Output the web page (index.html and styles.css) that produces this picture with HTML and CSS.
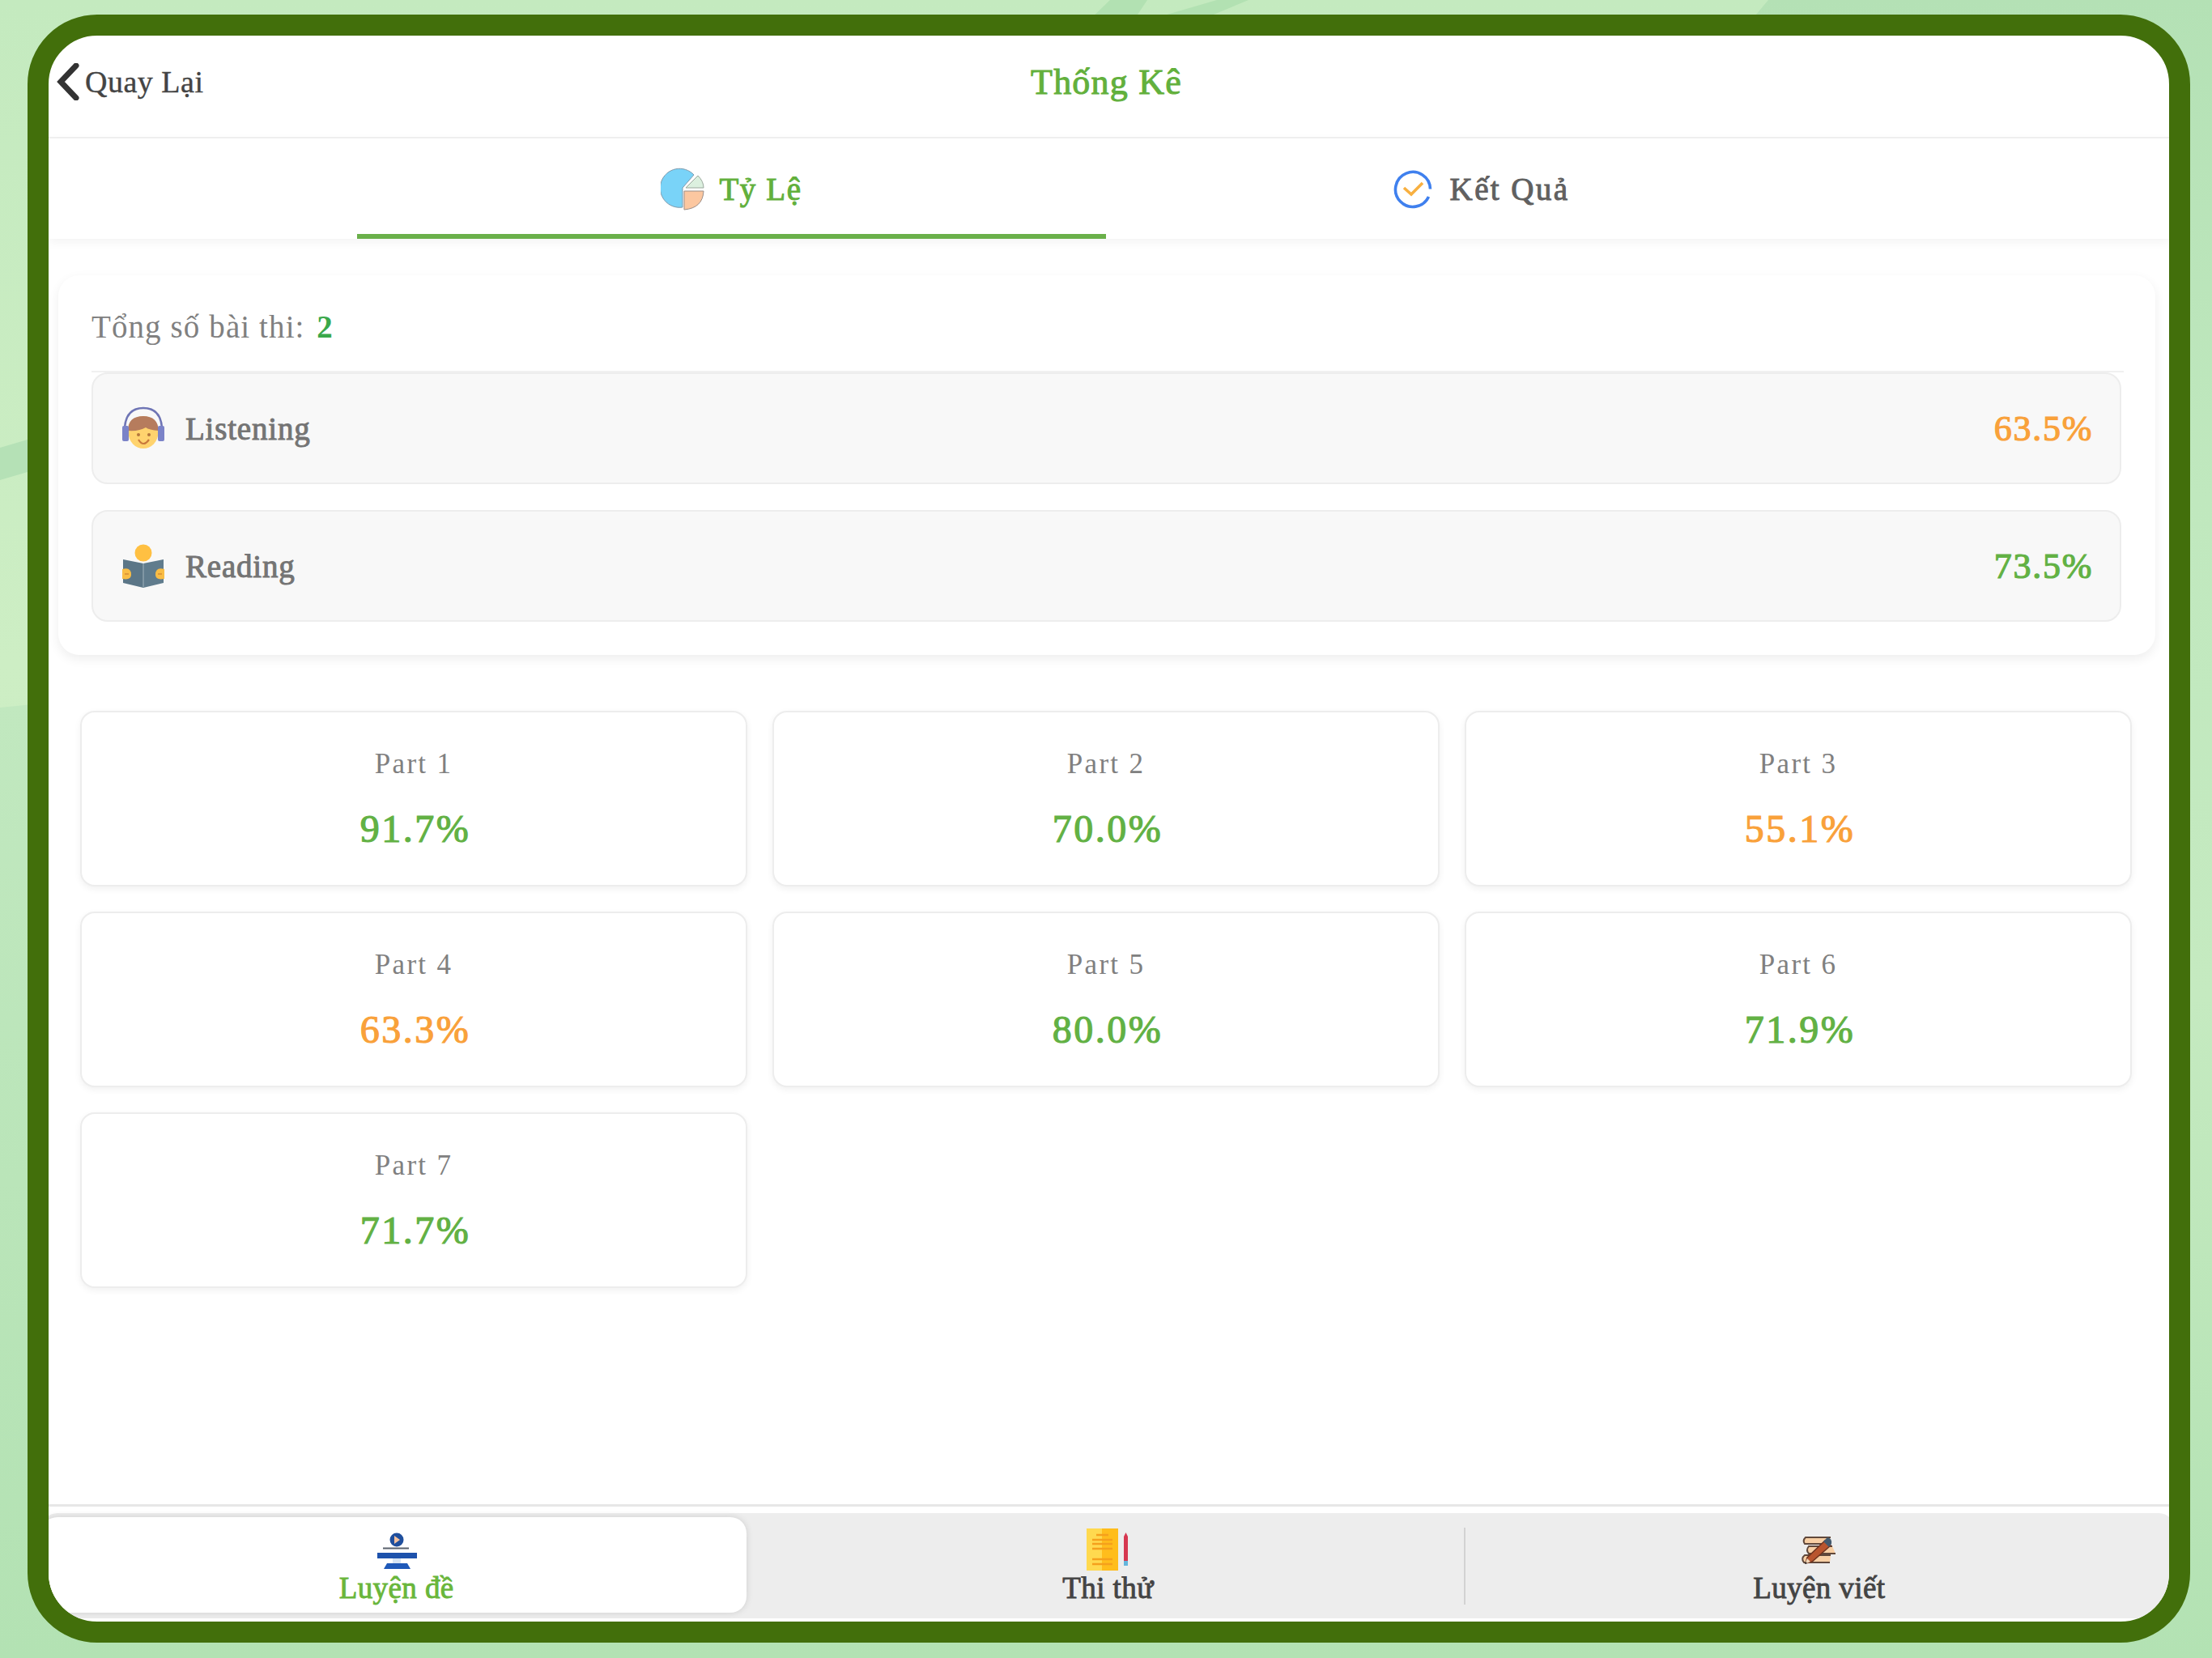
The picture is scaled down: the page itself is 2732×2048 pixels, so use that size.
FILE: index.html
```
<!DOCTYPE html>
<html lang="vi">
<head>
<meta charset="utf-8">
<title>Thống Kê</title>
<link rel="stylesheet" href="styles.css">
</head>
<body>
<svg class="backdrop" viewBox="0 0 2732 2048" aria-hidden="true">
  <defs>
    <linearGradient id="base" x1="0" y1="0" x2="0" y2="1">
      <stop offset="0" stop-color="#c4eabf"/><stop offset=".4" stop-color="#cdeec4"/><stop offset="1" stop-color="#c4eabf"/>
    </linearGradient>
    <linearGradient id="low" x1="0" y1="0" x2="0" y2="1">
      <stop offset="0" stop-color="#c1e8bf"/><stop offset="1" stop-color="#b3e2b3"/>
    </linearGradient>
    <linearGradient id="side" x1="0" y1="0" x2="0" y2="1">
      <stop offset="0" stop-color="#b4e1b5"/><stop offset=".3" stop-color="#c0e8be"/><stop offset=".6" stop-color="#c5eac0"/><stop offset="1" stop-color="#b3e2b3"/>
    </linearGradient>
  </defs>
  <rect width="2732" height="2048" fill="url(#base)"/>
  <path d="M0 553L34 543V583L0 593Z" fill="#b5e1b6"/>
  <path d="M0 874L60 868V1990H2732V2048H0Z" fill="url(#low)"/>
  <path d="M1371 0H1417L1397 30H1340ZM1503 0H1542L1470 30H1400Z" fill="#b2e1b2"/>
  <path d="M2184 0H2732V2048H2660V100H2100Z" fill="url(#side)"/>
</svg>
<main class="frame">
  <header class="topbar">
    <a class="back">
      <svg class="back-icon" viewBox="0 0 28 46"><path d="M24 3L5 23L24 43" fill="none" stroke="#333" stroke-width="7" stroke-linecap="round" stroke-linejoin="miter"/></svg>
      <span>Quay Lại</span>
    </a>
    <h1 class="title">Thống Kê</h1>
  </header>

  <nav class="tabs">
    <a class="tab tab-active">
      <svg class="tab-icon" viewBox="0 0 54 54">
        <path d="M27 25L41 9A24 24 0 1 0 27 49Z" fill="#79d3f8" stroke="#7f9aac" stroke-width="1"/>
        <path d="M31 25L46 10Q53 17 53 25Z" fill="#dcf0df" stroke="#9aa89c" stroke-width="1"/>
        <path d="M29 29H53Q52 50 29 52Z" fill="#fcc7a0" stroke="#9c8d86" stroke-width="1"/>
      </svg>
      <span>Tỷ Lệ</span>
    </a>
    <a class="tab">
      <svg class="tab-icon" viewBox="0 0 54 54">
        <path d="M47.500 26.500A21.500 21.500 0 1 0 45.500 36" fill="none" stroke="#3f80ee" stroke-width="3.600"/>
        <path d="M15 25L24 33L38 19" fill="none" stroke="#f8b040" stroke-width="3.600"/>
      </svg>
      <span class="tab-wide">Kết Quả</span>
    </a>
  </nav>

  <section class="summary">
    <p class="total">Tổng số bài thi: <b>2</b></p>
    <div class="skill">
      <svg class="skill-icon" viewBox="0 0 54 54">
        <ellipse cx="27" cy="32" rx="18.500" ry="20" fill="#ffd36e"/>
        <path d="M8 30Q8 12 27 12Q45 12 46 30Q34 29 30 26Q22 31 8 30Z" fill="#b67c5d"/>
        <path d="M4 26Q6 2 27 2Q48 2 50 26" fill="none" stroke="#6f75b5" stroke-width="2.500"/>
        <rect x="1" y="24" width="8" height="19" rx="2" fill="#7b83c8"/><rect x="45" y="24" width="8" height="19" rx="2" fill="#7b83c8"/>
        <circle cx="21" cy="35" r="2" fill="#b5763c"/><circle cx="34" cy="35" r="2" fill="#b5763c"/>
        <path d="M21 41Q27 51 34 41" fill="none" stroke="#c9793c" stroke-width="2.200"/>
      </svg>
      <span class="skill-name">Listening</span>
      <span class="rate warn">63.5%</span>
    </div>
    <div class="skill">
      <svg class="skill-icon" viewBox="0 0 54 54">
        <circle cx="27" cy="11" r="10.500" fill="#ffc042"/>
        <path d="M2 19L27 24V54L2 48Z" fill="#5b7687"/><path d="M52 19L27 24V54L52 48Z" fill="#607c8d"/>
        <path d="M27 24V53" stroke="#a2b4bd" stroke-width="1"/>
        <path d="M1 31Q12 28 12 38Q12 45 1 43Z" fill="#f9bd45"/><path d="M53 31Q42 28 42 38Q42 45 53 43Z" fill="#f9bd45"/>
        <path d="M4 37H9M45 37H50" stroke="#df9838" stroke-width="2"/>
      </svg>
      <span class="skill-name">Reading</span>
      <span class="rate">73.5%</span>
    </div>
  </section>

  <section class="parts">
    <article class="part"><span class="part-name">Part 1</span><span class="part-rate">91.7%</span></article>
    <article class="part"><span class="part-name">Part 2</span><span class="part-rate">70.0%</span></article>
    <article class="part"><span class="part-name">Part 3</span><span class="part-rate warn">55.1%</span></article>
    <article class="part"><span class="part-name">Part 4</span><span class="part-rate warn">63.3%</span></article>
    <article class="part"><span class="part-name">Part 5</span><span class="part-rate">80.0%</span></article>
    <article class="part"><span class="part-name">Part 6</span><span class="part-rate">71.9%</span></article>
    <article class="part"><span class="part-name">Part 7</span><span class="part-rate">71.7%</span></article>
  </section>

  <footer class="dock">
    <div class="dock-bar">
      <a class="dock-item dock-active">
        <svg class="dock-icon" viewBox="0 0 52 52">
          <circle cx="26" cy="14" r="8.500" fill="#204f9d"/><path d="M23 9L30 14L23 19Z" fill="#f4c2a0"/>
          <path d="M9 24.500H41" stroke="#59616c" stroke-width="2"/>
          <rect x="2" y="30" width="49" height="7" fill="#1d52ac"/><rect x="21" y="37" width="10" height="6" fill="#d6e4f4"/>
          <path d="M14 43H39L43 50H10Z" fill="#1f59b9"/>
        </svg>
        <span>Luyện đề</span>
      </a>
      <a class="dock-item">
        <svg class="dock-icon" viewBox="0 0 52 52">
          <rect x="0" y="0" width="20" height="52" fill="#ffd94f"/><rect x="19" y="0" width="20" height="52" fill="#ffbd1c"/>
          <path d="M12 8H27M7 14H32M7 19H32M7 25H32M7 38H32M7 44H32" stroke="#f5a01c" stroke-width="2.500"/>
          <path d="M46 10L48.500 5L51 10V40H46Z" fill="#d63750"/><rect x="46" y="40" width="5" height="6" fill="#64b5dc"/>
        </svg>
        <span>Thi thử</span>
      </a>
      <a class="dock-item dock-split">
        <svg class="dock-icon" viewBox="0 0 52 52">
          <path d="M40 11H9Q5 15 8 19H36M42 22H13Q9 27 13 31H46M40 33H8Q3 37 7 42H39" fill="#f8cfa4" stroke="#60483b" stroke-width="2"/>
          <path d="M33 15L40 21L17 41L9 43L11 36Z" fill="#b9552e" stroke="#70341f" stroke-width="1.500"/>
          <path d="M31 16L36 11Q42 12 41 19L38 23Z" fill="#435a6e"/><path d="M11 37L8 44L15 41Z" fill="#efd5b6"/><path d="M9 41L8 44L11 43Z" fill="#222"/>
        </svg>
        <span>Luyện viết</span>
      </a>
    </div>
  </footer>
</main>
</body>
</html>
```
FILE: styles.css
```
* { box-sizing: border-box; }

body {
  margin: 0;
  width: 2732px;
  height: 2048px;
  overflow: hidden;
  padding: 18px 27px 18px 34px;
  background: #c4eabf;
  color: #444;
  font-family: "Liberation Serif", "Times New Roman", serif;
  font-size: 39px;
}

.backdrop {
  position: absolute;
  inset: 0;
  width: 2732px;
  height: 2048px;
  z-index: -1;
}

.frame {
  height: 2011px;
  border: 26px solid #426f0b;
  border-radius: 86px;
  background: #fff;
  overflow: hidden;
  display: flex;
  flex-direction: column;
}

.topbar {
  display: grid;
  grid-template-columns: 1fr auto 1fr;
  align-items: center;
  height: 127px;
  padding: 0 16px 11px 10px;
  border-bottom: 2px solid #f1f1f1;
  flex: none;
}

.back {
  display: flex;
  align-items: center;
  gap: 7px;
  font-size: 38px;
  letter-spacing: .5px;
  -webkit-text-stroke: .4px;
}
.back-icon { width: 28px; height: 46px; }

.title {
  margin: 0;
  color: #62b03c;
  font-size: 44px;
  font-weight: 400;
  letter-spacing: 1.2px;
  -webkit-text-stroke: 1px;
}

.tabs {
  display: flex;
  justify-content: center;
  flex: none;
  height: 124px;
  padding-right: 7px;
  box-shadow: 0 4px 12px rgba(0, 0, 0, .05);
}
.tab {
  display: flex;
  align-items: center;
  justify-content: center;
  gap: 18px;
  width: 925px;
  padding-top: 7px;
  border-bottom: 6px solid transparent;
  color: #606060;
  letter-spacing: 1.6px;
  -webkit-text-stroke: 1px;
}
.tab-active { color: #62b03c; border-color: #6ab04a; }
.tab-wide { letter-spacing: 2.4px; }
.tab-icon { width: 54px; height: 54px; }

.summary {
  flex: none;
  margin: 45px 17px 0 12px;
  padding: 11px 42px 41px 41px;
  border-radius: 26px;
  background: #fff;
  box-shadow: 0 5px 14px rgba(0, 0, 0, .07);
}
.total {
  margin: 0 -3px 0 0;
  line-height: 106px;
  height: 109px;
  border-bottom: 2px solid #f0f0f0;
  color: #808080;
  letter-spacing: 1.1px;
}
.total b { color: #3aa84a; margin-left: 4px; }

.skill {
  display: flex;
  align-items: center;
  height: 138px;
  padding: 0 35px;
  border: 2px solid #ededed;
  border-radius: 20px;
  background: #f8f8f8;
}
.skill + .skill { margin-top: 32px; }
.skill-icon { width: 54px; height: 54px; margin-right: 25px; }
.skill-name {
  flex: 1;
  color: #747474;
  letter-spacing: .8px;
  -webkit-text-stroke: 1px;
}
.rate {
  color: #62b144;
  font-size: 44px;
  letter-spacing: 1.7px;
  margin-right: -2px;
  -webkit-text-stroke: 1.2px;
}

.parts {
  flex: 1;
  display: grid;
  grid-template-columns: repeat(3, 1fr);
  grid-auto-rows: 217px;
  gap: 31px;
  align-content: start;
  margin-top: 69px;
  padding: 0 46px 0 39px;
}
.part {
  display: flex;
  flex-direction: column;
  align-items: center;
  padding-top: 32px;
  border: 2px solid #ededed;
  border-radius: 18px;
  background: #fff;
  box-shadow: 0 3px 8px rgba(0, 0, 0, .06);
}
.part-name {
  color: #808080;
  font-size: 35px;
  line-height: 64px;
  letter-spacing: 2.3px;
}
.part-rate {
  margin-left: 4px;
  color: #62b144;
  font-size: 48px;
  line-height: 96px;
  letter-spacing: 2.5px;
  -webkit-text-stroke: 1.2px;
}
.warn { color: #f9a13a; }

.dock {
  flex: none;
  height: 145px;
  padding-top: 8px;
  border-top: 3px solid #e7e7e7;
}
.dock-bar {
  display: flex;
  height: 130px;
  margin: 0 -7px 0 -9px;
  padding: 5px 0 7px;
  border-radius: 20px;
  background: #ededed;
}
.dock-item {
  flex: 1;
  display: flex;
  flex-direction: column;
  align-items: center;
  padding-top: 14px;
  font-size: 37px;
  line-height: 43px;
  letter-spacing: .4px;
  -webkit-text-stroke: .9px;
}
.dock-active {
  flex: 0 0 calc(33.333% - 7px);
  margin-right: 7px;
  padding-left: 6px;
  border-radius: 20px;
  background: #fff;
  color: #69b63b;
  box-shadow: 0 0 8px rgba(0, 0, 0, .13);
}
.dock-split {
  background: linear-gradient(#d2d2d2, #d2d2d2) 0 13px / 2px 95px no-repeat;
}
.dock-icon { width: 52px; height: 52px; flex: none; }
```
